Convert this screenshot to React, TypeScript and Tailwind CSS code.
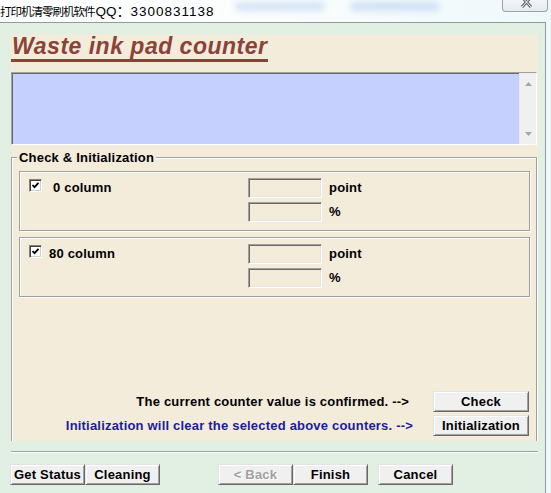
import React from "react";

function Btn({
  children,
  className = "",
  disabled = false,
}: {
  children: React.ReactNode;
  className?: string;
  disabled?: boolean;
}) {
  return (
    <div
      className={
        "h-[21px] flex items-center justify-center bg-[#f0f0f0] border border-t-[#e3e3e3] border-l-[#e3e3e3] border-r-[#696969] border-b-[#696969] shadow-[inset_1px_1px_0_#ffffff,inset_-1px_-1px_0_#a0a0a0] text-[13px] tracking-[0.2px] font-bold leading-[16px] " +
        (disabled ? "text-[#a0a0a0] [text-shadow:1px_1px_0_#ffffff] " : "text-black ") +
        className
      }
    >
      {children}
    </div>
  );
}

function Sunken({ className = "" }: { className?: string }) {
  return (
    <div
      className={
        "border border-t-[#a0a0a0] border-l-[#a0a0a0] border-r-white border-b-white shadow-[inset_1px_1px_0_#696969,inset_-1px_-1px_0_#e3e3e3] " +
        className
      }
    />
  );
}

function Check() {
  return (
    <div className="w-[13px] h-[13px] bg-white border border-t-[#808080] border-l-[#808080] border-r-white border-b-white shadow-[inset_1px_1px_0_#404040,inset_-1px_-1px_0_#d4d0c8] flex items-center justify-center">
      <svg width="11" height="11" viewBox="0 0 11 11">
        <polyline points="2.5,5 4.5,7.2 8.5,2.8" fill="none" stroke="#000" strokeWidth="1.8" />
      </svg>
    </div>
  );
}

function CounterBox({ label, labelMl }: { label: string; labelMl: string }) {
  return (
    <div className="w-[511px] h-[60px] border border-[#a0a0a0] shadow-[inset_1px_1px_0_#ffffff,1px_1px_0_#ffffff] flex pt-[6px]">
      <div className="w-[228px] pl-[9px] pt-[1px] flex items-start">
        <Check />
        <span className={"text-[13px] tracking-[0.2px] font-bold leading-[16px] mt-[1px] " + labelMl}>{label}</span>
      </div>
      <div className="flex flex-col gap-[4px]">
        <div className="flex items-center">
          <Sunken className="w-[74px] h-[20px] bg-[#f3ecda]" />
          <span className="ml-[7px] text-[13px] tracking-[0.2px] font-bold leading-[16px]">point</span>
        </div>
        <div className="flex items-center">
          <Sunken className="w-[74px] h-[20px] bg-[#f3ecda]" />
          <span className="ml-[7px] text-[13px] tracking-[0.2px] font-bold leading-[16px]">%</span>
        </div>
      </div>
    </div>
  );
}

export default function App() {
  return (
    <div className="w-[551px] h-[493px] overflow-hidden bg-[#eef8fa] font-['Liberation_Sans',Arial,sans-serif] text-black">
      {/* title bar */}
      <div className="h-[22px] w-[551px] flex items-start bg-gradient-to-r from-white via-[#fafdfe] to-[#eef8fb]">
        <div className="w-[235px] flex items-baseline leading-[20px] whitespace-nowrap">
          <span className="font-['Noto_Sans_CJK_SC',sans-serif] text-[11.5px] tracking-[-1px]">打印机清零刷机软件</span>
          <span className="text-[13.5px] ml-[1px]">QQ</span>
          <span className="font-['Noto_Sans_CJK_SC',sans-serif] text-[14px]">：</span>
          <span className="text-[13.5px] tracking-[1px]">3300831138</span>
        </div>
        <div className="mt-[2px] w-[90px] h-[9px] rounded-full bg-[#bcd3ee] opacity-60 blur-[3px]" />
        <div className="ml-[25px] mt-[2px] w-[90px] h-[9px] rounded-full bg-[#b7cff0] opacity-60 blur-[3px]" />
        <div className="ml-auto mr-[3px] w-[46px] h-[12px] rounded-b-[4px] border border-t-0 border-[#9aa3aa] bg-gradient-to-b from-[#f4f6f8] to-[#e6ebef] flex justify-center overflow-hidden">
          <svg width="12" height="10" viewBox="0 0 12 10" className="ml-[3px]">
            <path d="M1 -3 L10 7 M10 -3 L1 7" stroke="#5d6770" strokeWidth="3" />
            <path d="M1 -3 L10 7 M10 -3 L1 7" stroke="#ffffff" strokeWidth="1" />
          </svg>
        </div>
      </div>

      {/* window body */}
      <div className="w-[546px] h-[471px] bg-[#e1f0e2] border-t border-r border-[#8e9c9e] pl-[10px] pt-[11px] flex flex-col">
        <div className="ml-[1px] w-[527px] h-[407px] bg-[#f3ecda] overflow-hidden flex flex-col">
          <div className="flex">
            <span className="inline-block text-[23px] leading-[25px] font-bold italic tracking-[0.5px] text-[#8b4339] border-b-[3px] border-[#8b4339] pl-[1px] pr-[1px]">
              Waste ink pad counter
            </span>
          </div>

          <div className="mt-[10px] w-[526px] h-[73px] shrink-0 bg-[#c5d0fe] border border-t-[#a0a0a0] border-l-[#a0a0a0] border-r-white border-b-white shadow-[inset_1px_1px_0_#696969] flex justify-end">
            <div className="w-[17px] h-full bg-[#f0f0f0] border-l border-[#e8e8e8] flex flex-col items-center justify-between pt-[9px] pb-[8px]">
              <svg width="7" height="4" viewBox="0 0 7 4">
                <polygon points="0,4 7,4 3.5,0" fill="#a6a6a6" />
              </svg>
              <svg width="7" height="4" viewBox="0 0 7 4">
                <polygon points="0,0 7,0 3.5,4" fill="#a6a6a6" />
              </svg>
            </div>
          </div>

          <div className="relative mt-[12px] w-[526px] flex-1 border border-b-0 border-[#a0a0a0] shadow-[inset_1px_1px_0_#ffffff,1px_0_0_#ffffff] pl-[7px] flex flex-col">
            <span className="absolute left-[5px] top-[-8px] px-[2px] bg-[#f3ecda] text-[13px] tracking-[0.2px] font-bold leading-[16px]">
              Check &amp; Initialization
            </span>
            <div className="mt-[13px] flex flex-col gap-[6px]">
              <CounterBox label="0 column" labelMl="ml-[11px]" />
              <CounterBox label="80 column" labelMl="ml-[7px]" />
            </div>

            <div className="mt-auto pb-[5px] pr-[7px] flex flex-col gap-[3px]">
              <div className="flex items-center justify-end">
                <span className="mr-[24px] text-[13px] tracking-[0.2px] font-bold leading-[16px] text-black">
                  The current counter value is confirmed. --&gt;
                </span>
                <Btn className="w-[96px]">Check</Btn>
              </div>
              <div className="flex items-center justify-end">
                <span className="mr-[20px] text-[13px] tracking-[0.2px] font-bold leading-[16px] text-[#1c1c9c]">
                  Initialization will clear the selected above counters. --&gt;
                </span>
                <Btn className="w-[96px]">Initialization</Btn>
              </div>
            </div>
          </div>
        </div>

        <div className="mt-[10px] ml-[1px] w-[527px] h-[2px] border-t border-b border-t-[#a0a0a0] border-b-white" />

        <div className="mt-[11px] flex">
          <Btn className="w-[75px]">Get Status</Btn>
          <Btn className="w-[75px]">Cleaning</Btn>
          <Btn className="w-[75px] ml-[58px]" disabled>
            &lt; Back
          </Btn>
          <Btn className="w-[75px]">Finish</Btn>
          <Btn className="w-[75px] ml-[10px]">Cancel</Btn>
        </div>
      </div>
    </div>
  );
}
